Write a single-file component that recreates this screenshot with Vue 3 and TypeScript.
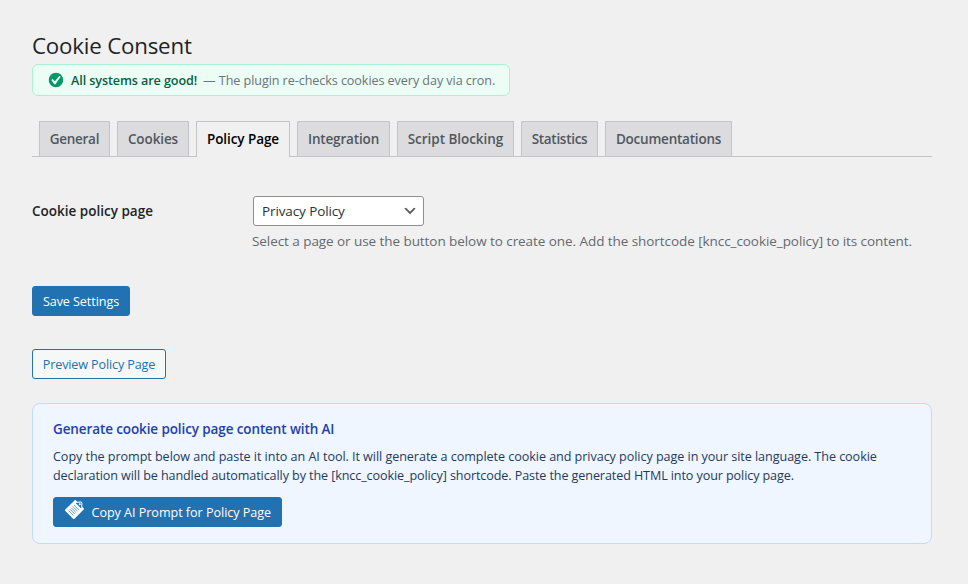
<script setup lang="ts">
import { ref } from 'vue'

interface Tab {
  label: string
  width: number
  tracking: number
}

const tabs: Tab[] = [
  { label: 'General', width: 71, tracking: -0.3 },
  { label: 'Cookies', width: 72, tracking: -0.1 },
  { label: 'Policy Page', width: 94, tracking: -0.08 },
  { label: 'Integration', width: 93, tracking: -0.16 },
  { label: 'Script Blocking', width: 117, tracking: -0.04 },
  { label: 'Statistics', width: 77, tracking: -0.3 },
  { label: 'Documentations', width: 127, tracking: -0.22 },
]
const active = ref('Policy Page')
</script>

<template>
  <main class="wrap">
    <h1 class="title">Cookie Consent</h1>

    <div class="status">
      <svg class="status-icon" viewBox="0 0 20 20" aria-hidden="true">
        <path d="M10 2c-4.42 0-8 3.58-8 8s3.58 8 8 8 8-3.58 8-8-3.58-8-8-8zm-.615 12.66h-1.34l-3.24-4.54 1.341-1.25 2.569 2.4 5.141-5.931 1.34.94-5.811 8.381z" />
      </svg>
      <strong>All systems are good!</strong>
      <span class="status-note">— The plugin re-checks cookies every day via cron.</span>
    </div>

    <nav class="tabs">
      <a
        v-for="tab in tabs"
        :key="tab.label"
        class="tab"
        :class="{ active: tab.label === active }"
        :style="{ width: tab.width + 'px', letterSpacing: tab.tracking + 'px' }"
        @click="active = tab.label"
      >{{ tab.label }}</a>
    </nav>

    <div class="field">
      <label class="field-label">Cookie policy page</label>
      <div class="field-control">
        <div class="select">
          <span>Privacy Policy</span>
          <svg viewBox="0 0 20 20" aria-hidden="true"><path d="M5 6l5 5 5-5 2 1-7 7-7-7 2-1z" /></svg>
        </div>
        <p class="description">Select a page or use the button below to create one. Add the shortcode [kncc_cookie_policy] to its content.</p>
      </div>
    </div>

    <button class="button primary save" type="button">Save Settings</button>
    <button class="button secondary" type="button">Preview Policy Page</button>

    <section class="panel">
      <h2>Generate cookie policy page content with AI</h2>
      <p class="panel-text">
        <span class="line-a">Copy the prompt below and paste it into an AI tool. It will generate a complete cookie and privacy policy page in your site language. The cookie</span><br>
        <span class="line-b">declaration will be handled automatically by the [kncc_cookie_policy] shortcode. Paste the generated HTML into your policy page.</span>
      </p>
      <button class="button primary copy" type="button">
        <svg viewBox="0 0 20 20" aria-hidden="true">
          <path d="M11.9.39l1.4 1.4c1.61.19 3.5-.74 4.61.37s.18 3 .37 4.61l1.4 1.4c.39.39.39 1.02 0 1.41l-9.19 9.2c-.4.39-1.03.39-1.42 0L1.29 11c-.39-.39-.39-1.02 0-1.42l9.2-9.19c.39-.39 1.02-.39 1.41 0zm.58 2.25l-.58.58 4.95 4.95.58-.58c-.19-.6-.2-1.22-.15-1.82.02-.31.05-.62.09-.92.12-1 .18-1.63-.17-1.98s-.98-.29-1.98-.17c-.3.04-.61.07-.92.09-.6.05-1.22.04-1.82-.15zm4.02.93c.39.39.39 1.03 0 1.42s-1.03.39-1.42 0-.39-1.03 0-1.42 1.03-.39 1.42 0z" />
          <path class="rules" d="M10.1 5l4.9 4.9M8.7 6.4l4.9 4.9M7.3 7.8l4.9 4.9M5.9 9.2l4.9 4.9M4.5 10.6l4.9 4.9" />
        </svg>
        <span>Copy AI Prompt for Policy Page</span>
      </button>
    </section>
  </main>
</template>

<style>
body {
  background: #f0f0f0;
}
</style>

<style scoped>
.wrap {
  box-sizing: border-box;
  width: 968px;
  height: 584px;
  padding: 31px 36px 0 32px;
  overflow: hidden;
  font-family: "Open Sans", "Noto Sans", sans-serif;
  font-size: 13.5px;
  color: #3c434a;
  white-space: nowrap;
}
.title {
  margin: 0;
  height: 33px;
  line-height: 30px;
  font-size: 22.3px;
  font-weight: 400;
  letter-spacing: -0.2px;
  color: #1d2327;
}
.status {
  box-sizing: border-box;
  display: flex;
  align-items: center;
  width: 478px;
  height: 32px;
  padding: 0 14px;
  border: 1px solid #a7f3d0;
  border-radius: 6px;
  background: #ecfdf5;
  font-size: 12.6px;
}
.status-icon {
  flex: none;
  width: 18px;
  height: 18px;
  margin-right: 6px;
  fill: #059669;
}
.status strong {
  font-weight: 600;
  letter-spacing: -0.1px;
  color: #065f46;
}
.status-note {
  margin-left: 6px;
  letter-spacing: -0.075px;
  color: #6b7280;
}
.tabs {
  display: flex;
  gap: 7px;
  height: 35px;
  margin-top: 25px;
  padding-left: 7px;
  border-bottom: 1px solid #c3c4c7;
}
.tab {
  box-sizing: border-box;
  height: 35px;
  border: 1px solid #c3c4c7;
  border-bottom: 0;
  background: #dcdcde;
  color: #50575e;
  font-weight: 600;
  line-height: 34px;
  text-align: center;
  cursor: pointer;
}
.tab.active {
  height: 36px;
  background: #f0f0f0;
  color: #000;
}
.field {
  display: flex;
  margin-top: 39px;
}
.field-label {
  width: 221px;
  line-height: 30px;
  font-weight: 600;
  color: #1d2327;
}
.select {
  box-sizing: border-box;
  display: flex;
  align-items: center;
  justify-content: space-between;
  width: 171px;
  height: 30px;
  padding: 0 5px 0 8px;
  border: 1px solid #8c8f94;
  border-radius: 3px;
  background: #fff;
  color: #2c3338;
  letter-spacing: -0.11px;
}
.select svg {
  width: 16px;
  height: 16px;
  fill: #555;
}
.description {
  margin: 5px 0 0 -1px;
  line-height: 21px;
  letter-spacing: -0.065px;
  color: #646970;
}
.button {
  box-sizing: border-box;
  display: flex;
  align-items: center;
  justify-content: center;
  height: 30px;
  padding: 0;
  border: 1px solid #2271b1;
  border-radius: 3px;
  font: 400 12.6px "Open Sans", "Noto Sans", sans-serif;
  letter-spacing: -0.08px;
}
.primary {
  background: #2271b1;
  color: #fff;
}
.save {
  width: 98px;
  margin-top: 34px;
}
.secondary {
  width: 134px;
  margin-top: 33px;
  background: #f6f7f7;
  color: #2271b1;
  letter-spacing: -0.13px;
}
.panel {
  box-sizing: border-box;
  height: 141px;
  margin-top: 24px;
  padding: 15px 20px 0;
  border: 1px solid #bfdbfe;
  border-radius: 8px;
  background: #eff6ff;
}
.panel h2 {
  margin: 0;
  line-height: 20px;
  font-size: 13.5px;
  font-weight: 600;
  letter-spacing: -0.11px;
  color: #1e40af;
}
.panel-text {
  margin: 8px 0 12px;
  line-height: 19px;
  font-size: 12.6px;
  color: #1e3a5f;
}
.line-a {
  letter-spacing: -0.058px;
}
.line-b {
  letter-spacing: -0.105px;
}
.copy {
  width: 229px;
  justify-content: flex-start;
  padding-left: 10px;
  letter-spacing: -0.04px;
}
.copy svg {
  flex: none;
  width: 20px;
  height: 20px;
  margin: -4px 7.5px 0 0;
  fill: #fff;
}
.rules {
  fill: none;
  stroke: #2271b1;
  stroke-width: 0.7;
}
</style>
